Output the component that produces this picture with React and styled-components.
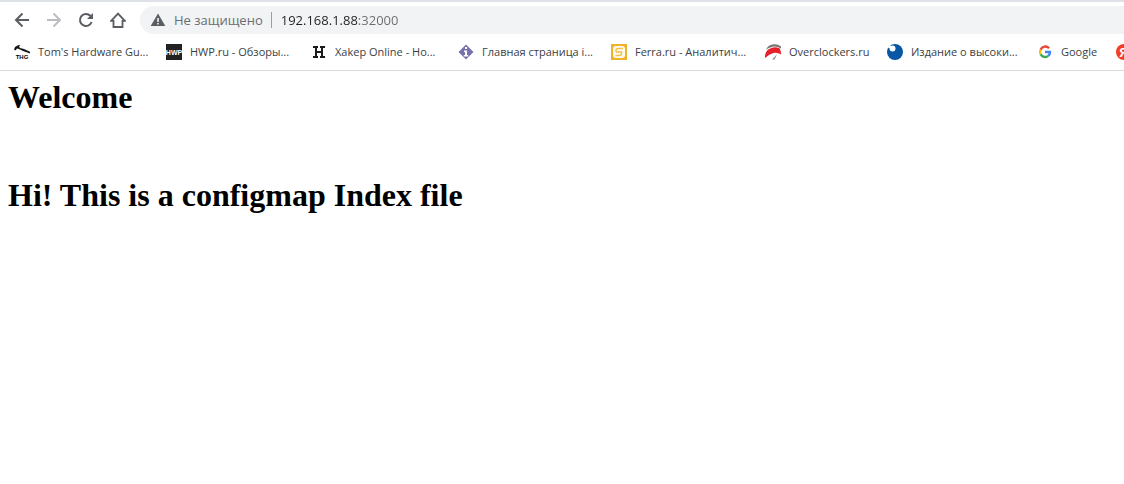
import React from "react";
import styled, { createGlobalStyle } from "styled-components";

const GlobalStyle = createGlobalStyle`
  * { box-sizing: border-box; }
  body { margin: 0; background: #fff; }
`;

const Chrome = styled.header`
  border-top: 2px solid #dee1e6;
  border-bottom: 1px solid #d9dadc;
  font-family: "Open Sans", "Noto Sans", sans-serif;
  overflow: hidden;
`;

const Toolbar = styled.nav`
  display: flex;
  align-items: center;
  padding: 4px 0 0 6px;
`;

const IconButton = styled.button`
  flex: none;
  display: grid;
  place-items: center;
  width: 32px;
  height: 28px;
  padding: 0;
  border: 0;
  background: none;
  color: ${(p) => (p.disabled ? "#bbbdc0" : "#5a5d61")};
`;

const AddressBar = styled.form`
  flex: 1;
  display: flex;
  align-items: center;
  height: 28px;
  margin-left: 6px;
  padding-left: 10px;
  border-radius: 14px 0 0 14px;
  background: #f1f3f4;
`;

const SecurityButton = styled.button`
  display: flex;
  align-items: center;
  gap: 8px;
  padding: 0 8px 0 0;
  border: 0;
  border-right: 1px solid #9a9da1;
  background: none;
  color: #6a6d71;
  font: 13px/16px "Open Sans", "Noto Sans", sans-serif;
  white-space: nowrap;
`;

const UrlInput = styled.input`
  flex: 1;
  min-width: 0;
  margin-left: 9px;
  padding: 0;
  border: 0;
  outline: 0;
  font: 13px/18px "Open Sans", "Noto Sans", sans-serif;
  color: transparent;
  caret-color: #202124;
  background: linear-gradient(to right, #202124 76px, #696c70 76px);
  -webkit-background-clip: text;
  background-clip: text;
`;

const Bookmarks = styled.ul`
  display: flex;
  gap: 17px;
  height: 36px;
  margin: 0;
  padding: 0 0 0 14px;
  list-style: none;
`;

const BookmarkItem = styled.li`
  flex: none;
  display: flex;
`;

const BookmarkLink = styled.a`
  display: flex;
  align-items: center;
  gap: 8px;
  color: #3c3e42;
  font-size: 11px;
  line-height: 16px;
  text-decoration: none;
  white-space: nowrap;
`;

const BookmarkLabel = styled.span`
  width: ${(p) => p.$width}px;
`;

const Page = styled.main`
  padding: 8px;
  color: #000;
  font-family: "Liberation Serif", serif;
`;

const Heading = styled.h1`
  margin: 21px 0;
  font-size: 32px;
  line-height: 37px;

  &:first-child { margin-top: 0; }
`;

const BlankLine = styled.div`
  height: 19px;
`;

const IconText = styled.text`
  font-family: "Liberation Sans", sans-serif;
  font-size: ${(p) => p.$size}px;
  font-weight: 700;
  text-anchor: middle;
`;

const Glyph = ({ children, size = 16, ...rest }) => (
  <svg width={size} height={size} viewBox={`0 0 ${size} ${size}`} aria-hidden="true" {...rest}>
    {children}
  </svg>
);

const BackIcon = () => (
  <Glyph fill="none" stroke="currentColor" strokeWidth="2">
    <path d="M15 8H2.5M8.5 1.5L2 8l6.500 6.500" />
  </Glyph>
);
const ForwardIcon = () => (
  <Glyph fill="none" stroke="currentColor" strokeWidth="2">
    <path d="M1 8h12.500M7.500 1.500L14 8l-6.500 6.500" />
  </Glyph>
);
const ReloadIcon = () => (
  <Glyph>
    <path d="M13.600 10A6 6 0 1 1 12.300 3.800L14 5.500" fill="none" stroke="currentColor" strokeWidth="2" />
    <path d="M15 1v6H9z" fill="currentColor" />
  </Glyph>
);
const HomeIcon = () => (
  <Glyph fill="none" stroke="currentColor" strokeWidth="1.800">
    <path d="M3.500 8.800H1.200L8 1.600l6.800 7.200h-2.300V15h-9z" />
  </Glyph>
);
const WarningIcon = () => (
  <Glyph>
    <path d="M8 1.500L15.300 14H.7z" fill="#5a5d61" />
    <path d="M7.200 6h1.600v4H7.200zM7.200 11h1.600v1.600H7.200z" fill="#f1f3f4" />
  </Glyph>
);

const TomIcon = () => (
  <Glyph>
    <path d="M0 5.500L1 3l3-1.800L6.500 1 5 2.500l1 1.500 4 1 6 2.800V9.500L9 7 5 5 3 4.500 1.500 6.500z" fill="#161616" />
    <IconText $size={6} x="8" y="15" fill="#000">THG</IconText>
  </Glyph>
);
const HwpIcon = () => (
  <Glyph>
    <path d="M0 0h16v16H0z" fill="#222" />
    <IconText $size={7} x="8" y="11" fill="#fff">HWP</IconText>
  </Glyph>
);
const XakepIcon = () => (
  <Glyph>
    <path
      d="M2 2h5v2H6v3h4V4H9V2h5v2h-2v8h2v2H9v-2h1V9H6v3h1v2H2v-2h2V4H2z"
      fill="#1b1b1b"
    />
  </Glyph>
);
const InfoIcon = () => (
  <Glyph>
    <path d="M8 .5L15.500 8 8 15.500.5 8z" fill="#7771ae" />
    <path d="M7 3h2v2H7zM6 6.500h3V11h1.200v1.500H5.800V11H7V8H6z" fill="#fff" />
  </Glyph>
);
const FerraIcon = () => (
  <Glyph>
    <path d="M0 0h16v16H0z" fill="#efb32b" />
    <rect x="2" y="2" width="12" height="12" rx="3" fill="#fffaf0" />
    <path d="M12 4.500H7.500Q5 4.500 5 6.500V8M5 8h5.500v1.500q0 2-2.500 2H4.500" fill="none" stroke="#f2c04b" strokeWidth="1.400" />
  </Glyph>
);
const OverclockersIcon = () => (
  <Glyph>
    <path d="M1 6Q3 .5 9 .3q4-.3 7 2.200v2Q11 1.500 6 3.200 3 4 1 6z" fill="#777" />
    <path d="M0 14Q-.5 8 4 5 9 2 14 4q2 1.500 2 6.500-5-3-9.500-.5Q3 11.500 0 14z" fill="#e8222c" />
    <path d="M1 15q3-5 9-5.500" fill="none" stroke="#fff" strokeWidth="1" />
    <path d="M7 15.500l5-5-2.500 5z" fill="#888" />
  </Glyph>
);
const OrbIcon = () => (
  <Glyph>
    <circle cx="8" cy="8" r="8" fill="#0757a4" />
    <circle cx="5.500" cy="4.500" r="3" fill="#fff" />
    <circle cx="2.500" cy="2.500" r="1.500" fill="#fff" />
  </Glyph>
);
const GoogleIcon = () => (
  <Glyph>
    <g fill="none" strokeWidth="2.400">
      <path d="M12 4.300A5 5 0 0 0 3.600 5.700" stroke="#ea4335" />
      <path d="M3.600 5.700A5 5 0 0 0 3.600 10.300" stroke="#fbbc05" />
      <path d="M3.600 10.300A5 5 0 0 0 11.200 11.900" stroke="#34a853" />
      <path d="M11.200 11.900A5 5 0 0 0 13 8H8" stroke="#4285f4" />
    </g>
  </Glyph>
);
const YandexIcon = () => (
  <Glyph>
    <circle cx="8" cy="8" r="8" fill="#f33c22" />
    <IconText $size={13} x="8" y="13" fill="#fff">Я</IconText>
  </Glyph>
);

const bookmarks = [
  { label: "Tom's Hardware Gu...", width: 111, Icon: TomIcon },
  { label: "HWP.ru - Обзоры...", width: 104, Icon: HwpIcon },
  { label: "Xakep Online - Но...", width: 106, Icon: XakepIcon },
  { label: "Главная страница i...", width: 112, Icon: InfoIcon },
  { label: "Ferra.ru - Аналитич...", width: 113, Icon: FerraIcon },
  { label: "Overclockers.ru", width: 81, Icon: OverclockersIcon },
  { label: "Издание о высоки...", width: 109, Icon: OrbIcon },
  { label: "Google", width: 38, Icon: GoogleIcon },
  { label: "", width: 0, Icon: YandexIcon },
];

export default function App() {
  return (
    <>
      <GlobalStyle />
      <Chrome>
        <Toolbar>
          <IconButton aria-label="Назад"><BackIcon /></IconButton>
          <IconButton aria-label="Вперёд" disabled><ForwardIcon /></IconButton>
          <IconButton aria-label="Обновить"><ReloadIcon /></IconButton>
          <IconButton aria-label="Главная"><HomeIcon /></IconButton>
          <AddressBar onSubmit={(e) => e.preventDefault()}>
            <SecurityButton type="button"><WarningIcon />Не защищено</SecurityButton>
            <UrlInput aria-label="Адрес" defaultValue="192.168.1.88:32000" spellCheck={false} />
          </AddressBar>
        </Toolbar>
        <Bookmarks>
          {bookmarks.map(({ label, width, Icon }) => (
            <BookmarkItem key={label}>
              <BookmarkLink href="#" aria-label={label || "Яндекс"}>
                <Icon />
                {label && <BookmarkLabel $width={width}>{label}</BookmarkLabel>}
              </BookmarkLink>
            </BookmarkItem>
          ))}
        </Bookmarks>
      </Chrome>
      <Page>
        <Heading>Welcome</Heading>
        <BlankLine />
        <Heading>Hi! This is a configmap Index file</Heading>
      </Page>
    </>
  );
}
